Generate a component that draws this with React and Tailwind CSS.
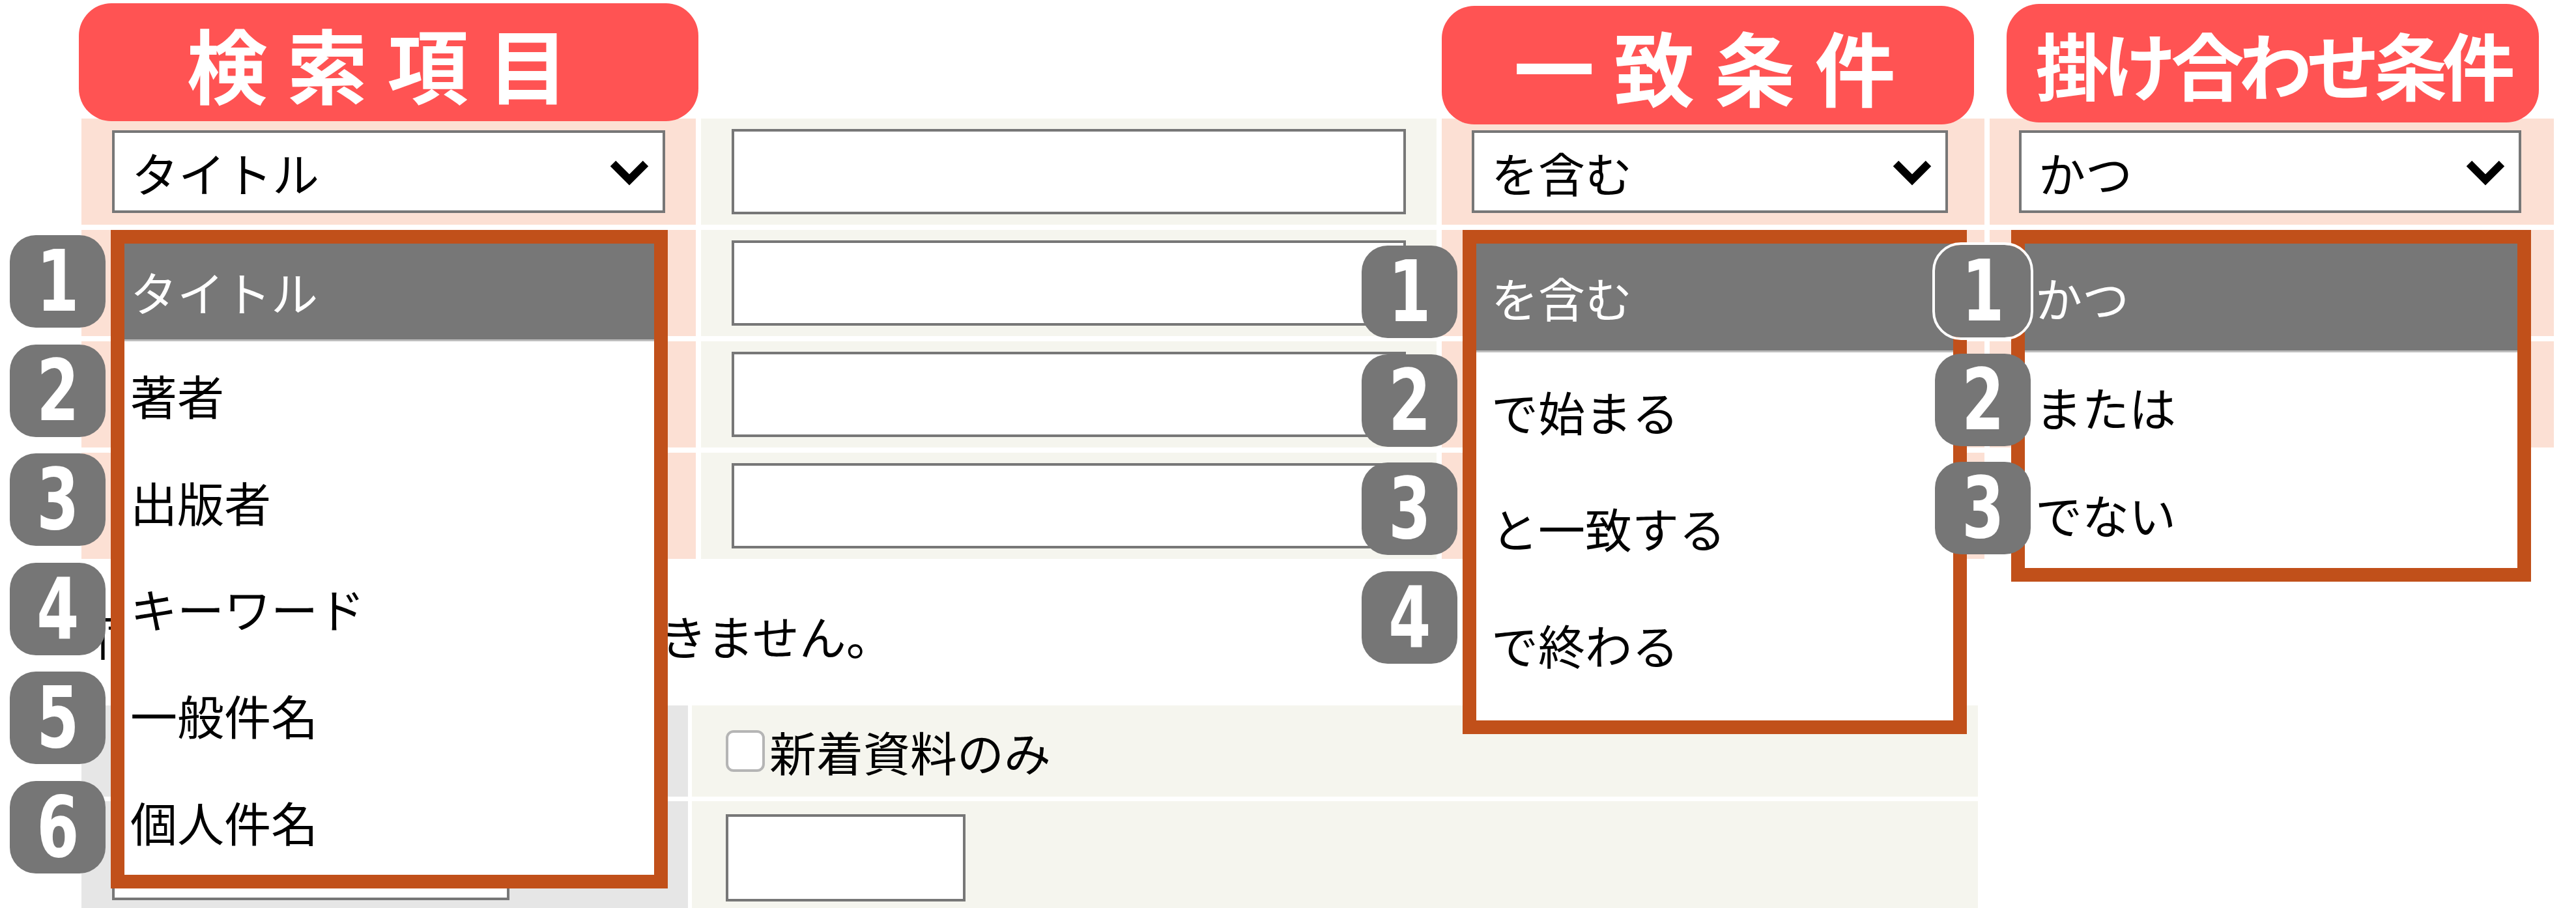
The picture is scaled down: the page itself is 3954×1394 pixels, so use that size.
import React from "react";

const fieldOptions = ["タイトル", "著者", "出版者", "キーワード", "一般件名", "個人件名"];
const matchOptions = ["を含む", "で始まる", "と一致する", "で終わる"];
const joinOptions = ["かつ", "または", "でない"];

function Chevron() {
    return (
        <svg width="62" height="42" viewBox="0 0 62 42" className="shrink-0">
            <polyline points="6,8 31,33 56,8" fill="none" stroke="#000" strokeWidth="12" strokeLinejoin="miter" />
        </svg>
    );
}

function Select({label}) {
    return (
        <div className="flex h-[127px] w-full items-center justify-between border-[4px] border-[#777] bg-white pl-[26px] pr-[20px] text-[72px] leading-none text-black">
            <span>{label}</span>
            <Chevron/>
        </div>
    );
}

function TextBox({className}) {
    return <div className={"border-[4px] border-[#777] bg-white " + className}></div>;
}

function Badge({n, outline}) {
    return (
        <div className={"flex h-[142px] w-[147px] items-center justify-center rounded-[40px] bg-[#767676] font-['DejaVu_Sans_Condensed','DejaVu_Sans',sans-serif] text-[130px] font-bold leading-none text-white " + (outline ? "outline-[4px] outline-white" : "")}>
            <span className="inline-block scale-x-[0.8]">{n}</span>
        </div>
    );
}

function Label({text, className}) {
    return (
        <div className={"relative z-10 flex items-center justify-center rounded-[50px] bg-[#ff5353] font-bold leading-none text-white " + className}>
            {text}
        </div>
    );
}

function App() {
    const rows = [0, 1, 2, 3];

    return (
        <div className="relative h-[1394px] w-[3954px] overflow-hidden bg-white font-['Noto_Sans_CJK_JP','Noto_Sans',sans-serif]">
            {/* header labels */}
            <div className="grid h-[182px] grid-cols-[943px_1129px_833px_866px] gap-x-[8px] pl-[125px]">
                <Label text="検索項目" className="-mx-[4px] mt-[5px] h-[181px] pr-[4px] text-[124px] tracking-[30px]"/>
                <div></div>
                <Label text="一致条件" className="mr-[16px] mt-[9px] h-[182px] pl-[20px] text-[124px] tracking-[30px]"/>
                <Label text="掛け合わせ条件" className="ml-[26px] mr-[23px] mt-[6px] h-[182px] text-[112px] tracking-[-8px]"/>
            </div>

            {/* search rows */}
            <div className="grid grid-cols-[943px_1129px_833px_866px] gap-[8px] pl-[125px]">
                {rows.map((r) => (
                    <React.Fragment key={r}>
                        <div className="flex h-[163px] items-center bg-[#fce0d4] px-[47px]">
                            <Select label="タイトル"/>
                        </div>
                        <div className="flex h-[163px] items-center bg-[#f5f5ee] px-[47px]">
                            <TextBox className="h-[131px] w-full"/>
                        </div>
                        <div className="flex h-[163px] items-center bg-[#fce0d4] pl-[46px] pr-[56px]">
                            <Select label="を含む"/>
                        </div>
                        {r < 3 ?
                            <div className="flex h-[163px] items-center bg-[#fce0d4] pl-[45px] pr-[50px]">
                                <Select label="かつ"/>
                            </div> :
                            <div className="h-[163px]"></div>
                        }
                    </React.Fragment>
                ))}
                <div className="col-span-4 flex h-[217px] items-center pl-[24px] text-[72px] leading-none text-black">
                    同じ検索項目は重複指定できません。
                </div>
            </div>

            {/* options rows */}
            <div className="grid grid-cols-[931px_1974px] gap-x-[6px] gap-y-[7px] pl-[125px]">
                <div className="h-[140px] bg-[#e6e6e6]"></div>
                <div className="flex h-[140px] items-center bg-[#f5f5ee] pl-[52px] text-[72px] leading-none text-black">
                    <span className="mr-[7px] h-[64px] w-[60px] rounded-[12px] border-[4px] border-[#b5b5b5] bg-white"></span>
                    新着資料のみ
                </div>
                <div className="h-[200px] bg-[#e6e6e6] pl-[47px] pt-[20px]">
                    <TextBox className="h-[132px] w-[610px]"/>
                </div>
                <div className="h-[200px] bg-[#f5f5ee] pl-[52px] pt-[20px]">
                    <TextBox className="h-[134px] w-[368px]"/>
                </div>
            </div>

            {/* open dropdown lists */}
            <div className="absolute left-[170px] top-[353px] flex h-[1011px] w-[855px] flex-col border-[21px] border-[#c1501a] bg-white text-[72px] leading-none text-black">
                {fieldOptions.map((o, i) => (
                    <div key={o} className={i === 0 ? "flex h-[150px] items-center border-b-[3px] border-[#bdbdbd] bg-[#777] pl-[9px] text-white" : "flex h-[164px] items-center pl-[9px]"}>{o}</div>
                ))}
            </div>
            <div className="absolute left-[2245px] top-[353px] flex h-[774px] w-[774px] flex-col border-[21px] border-[#c1501a] bg-white text-[72px] leading-none text-black">
                {matchOptions.map((o, i) => (
                    <div key={o} className={i === 0 ? "flex h-[167px] items-center border-b-[3px] border-[#bdbdbd] bg-[#777] pl-[23px] text-white" : "flex h-[179px] items-center pl-[23px]"}>{o}</div>
                ))}
            </div>
            <div className="absolute left-[3087px] top-[353px] flex h-[540px] w-[798px] flex-col border-[21px] border-[#c1501a] bg-white text-[72px] leading-none text-black">
                {joinOptions.map((o, i) => (
                    <div key={o} className={i === 0 ? "flex h-[168px] items-center border-b-[3px] border-[#bdbdbd] bg-[#777] pl-[16px] text-white" : "flex h-[166px] items-center pl-[16px]"}>{o}</div>
                ))}
            </div>

            {/* number badges */}
            <div className="absolute left-[15px] top-[361px] flex flex-col gap-[25.5px]">
                {fieldOptions.map((o, i) => <Badge key={o} n={i + 1}/>)}
            </div>
            <div className="absolute left-[2090px] top-[377px] flex flex-col gap-[24.7px]">
                {matchOptions.map((o, i) => <Badge key={o} n={i + 1}/>)}
            </div>
            <div className="absolute left-[2970px] top-[376px] flex flex-col gap-[24.5px]">
                {joinOptions.map((o, i) => <Badge key={o} n={i + 1} outline={i === 0}/>)}
            </div>
        </div>
    );
}

export default App;
